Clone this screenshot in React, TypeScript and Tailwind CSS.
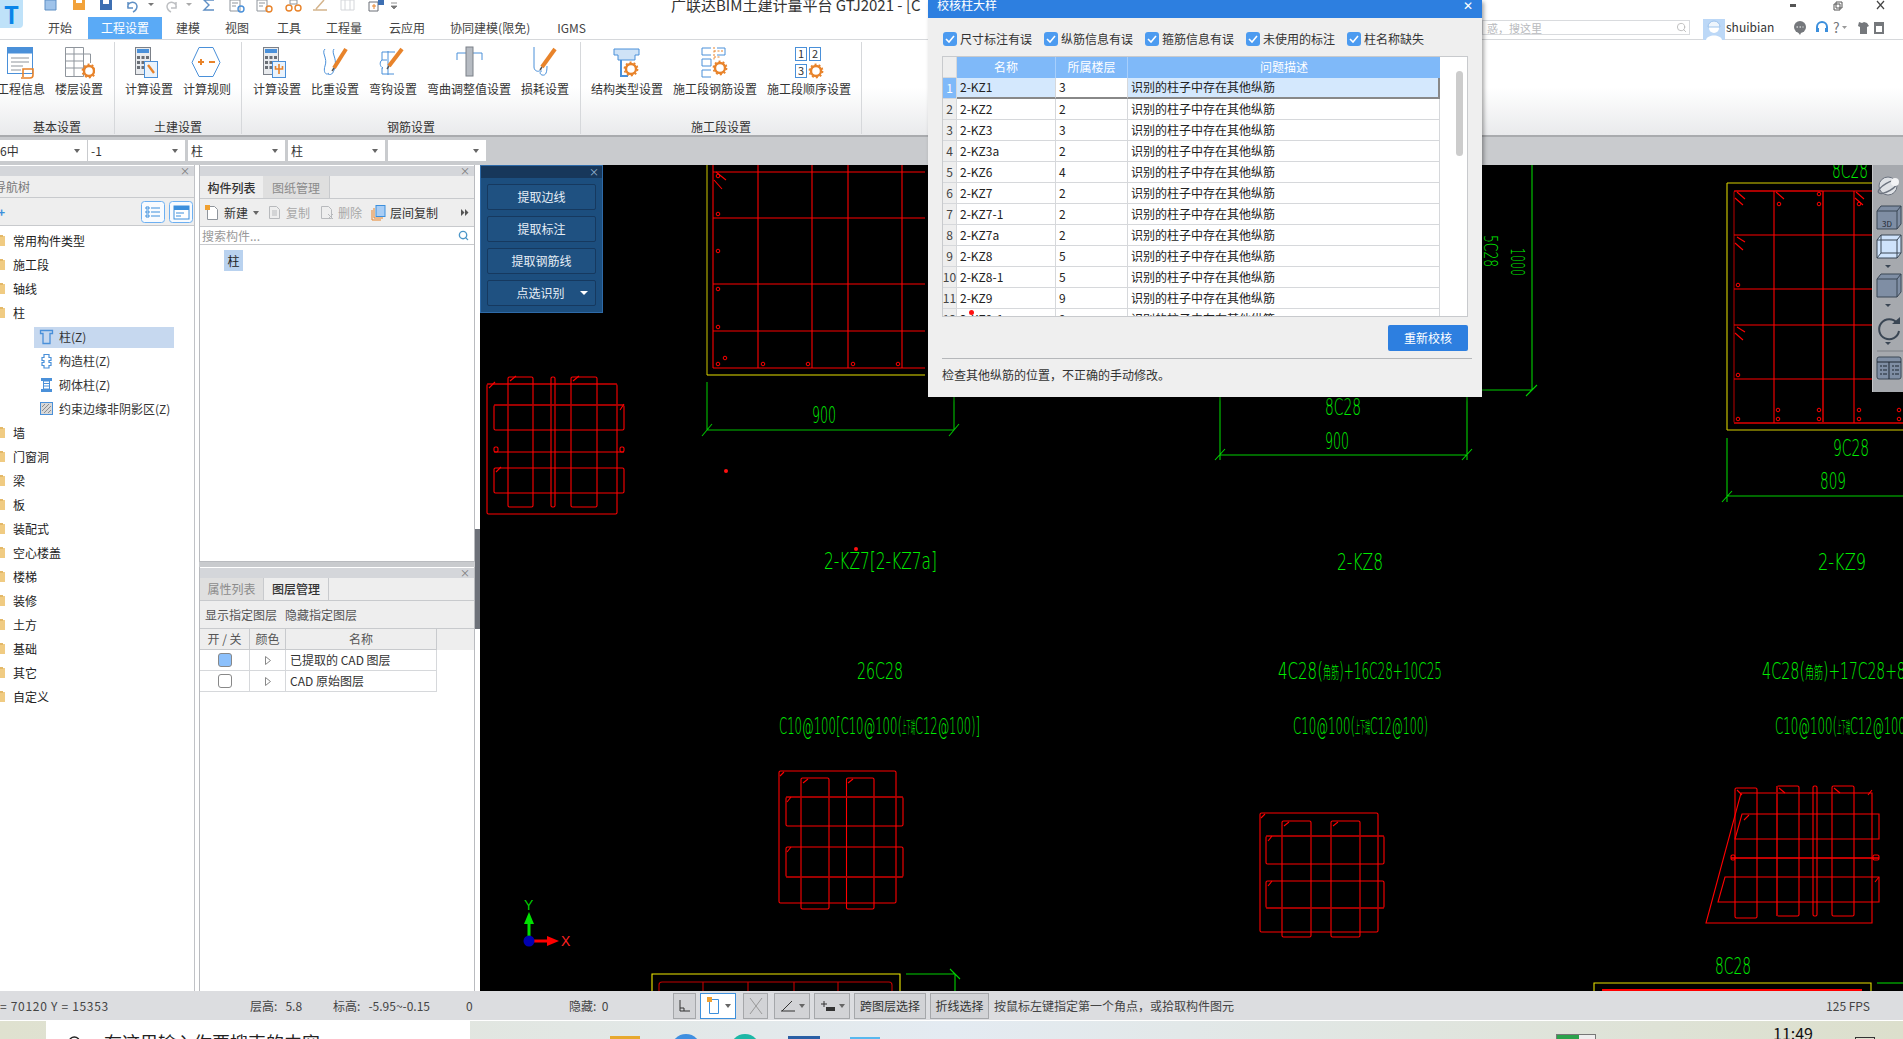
import React from 'react';
import { Search } from 'lucide-react';

const BLUE = '#4a90d9';
const ORANGE = '#e8832a';
const GRAY = '#7b8088';

// small cog used on most of the ribbon icons
const Gear = ({ x, y, r = 5 }: { x: number; y: number; r?: number }) => (
  <g>
    <circle cx={x} cy={y} r={r} fill="none" stroke={ORANGE} strokeWidth={2.4} />
    <circle cx={x} cy={y} r={r + 1.6} fill="none" stroke={ORANGE} strokeWidth={1.6} strokeDasharray="2 2.2" />
  </g>
);

const Pencil = ({ x1, y1, x2, y2 }: { x1: number; y1: number; x2: number; y2: number }) => (
  <g>
    <line x1={x1} y1={y1} x2={x2} y2={y2} stroke={ORANGE} strokeWidth={4} />
    <line x1={x1} y1={y1} x2={x1 - 2} y2={y1 + 3} stroke="#555" strokeWidth={1.4} />
  </g>
);

const Calc = () => (
  <g>
    <rect x={2.5} y={1.5} width={15} height={27} fill="#e9ebee" stroke={GRAY} />
    <rect x={4} y={3} width={12} height={4} fill={BLUE} />
    <path d="M4 10h3v3h-3zM8.500 10h3v3h-3zM13 10h3v3h-3zM4 15h3v3h-3zM8.500 15h3v3h-3zM4 20h3v3h-3zM8.500 20h3v3h-3z" fill="#6a6f76" />
  </g>
);

const ribbonIcons: Record<string, React.ReactNode> = {
  info: (
    <g>
      <rect x={2.500} y={1.500} width={25} height={26} fill="#fff" stroke={BLUE} />
      <rect x={2.500} y={1.500} width={25} height={6} fill={BLUE} />
      <path d="M6 12h18M6 16h18M6 20h12M6 24h10" stroke="#8f959c" />
      <path d="M18 31v-8h10v6a3 3 0 0 1-3 3h-9" fill="none" stroke={ORANGE} strokeWidth={1.6} />
    </g>
  ),
  floor: (
    <g>
      <path d="M2.500 1.500h18v29h-18zM2.500 8h18M2.500 15h18M2.500 22h18M11 1.500v29M20.500 8h7v9" fill="#fff" stroke="#8f959c" />
      <Gear x={26} y={25} />
    </g>
  ),
  calc: (
    <g>
      <Calc />
      <rect x={11.500} y={15.500} width={13} height={16} fill="#eaf3fc" stroke={BLUE} />
      <path d="M15 19l6 8" stroke={ORANGE} strokeWidth={2.4} />
    </g>
  ),
  rule: (
    <g>
      <path d="M8 1.500h14l7 15-7 14h-14l-7-14z" fill="#fff" stroke={BLUE} />
      <path d="M7 16h6M10 13v6M18 16h6" stroke={ORANGE} strokeWidth={2} />
    </g>
  ),
  calc2: (
    <g>
      <Calc />
      <rect x={11.500} y={15.500} width={13} height={16} fill="#eaf3fc" stroke={BLUE} />
      <path d="M18 18v10M14.500 20v3h7v-3" fill="none" stroke={ORANGE} strokeWidth={1.6} />
    </g>
  ),
  weight: (
    <g>
      <path d="M6 3C2 7 9 12 6 20c-2 6 1 10 4 7M15 3c-3 4 3 9 1 17-1 6-3 10-7 8" fill="none" stroke={BLUE} />
      <Pencil x1={15} y1={22} x2={27} y2={3} />
    </g>
  ),
  hook: (
    <g>
      <path d="M18 6H5v8h5M5 14c-3 2-2 7 1 8h-1v6h12M11 5v24" fill="none" stroke={BLUE} />
      <Pencil x1={12} y1={20} x2={25} y2={3} />
    </g>
  ),
  bend: (
    <g>
      <path d="M4 14V7h25v7" fill="none" stroke={BLUE} />
      <rect x={13} y={1} width={7} height={29} fill="#b6bbc2" stroke="#7b8088" />
    </g>
  ),
  loss: (
    <g>
      <path d="M5 1v20c0 5 7 6 7 1M18 20c0 6-1 10-5 9-3-1-2-4 0-4" fill="none" stroke={BLUE} />
      <Pencil x1={13} y1={21} x2={26} y2={3} />
    </g>
  ),
  struct: (
    <g>
      <path d="M3 3h25v6h-4v5h-17v-5h-4z" fill="#cfe3f7" stroke={BLUE} />
      <path d="M10 14v16h7" fill="none" stroke={BLUE} strokeWidth={2} />
      <Gear x={20} y={23} />
    </g>
  ),
  seg: (
    <g>
      <path d="M12 2H3v7h9M3 13h9v7H3zM12 24H3v7h9M18 2h8v7h-8" fill="none" stroke={BLUE} />
      <path d="M15 1v13M15 5h9M15 11h6" stroke={ORANGE} strokeDasharray="2 1.500" />
      <Gear x={21} y={22} />
    </g>
  ),
  order: (
    <g>
      <rect x={2.500} y={1.500} width={11} height={13} fill="#fff" stroke={BLUE} />
      <rect x={16.500} y={1.500} width={11} height={13} fill="#fff" stroke={BLUE} />
      <rect x={2.500} y={18.500} width={11} height={13} fill="#fff" stroke={BLUE} />
      <text x={8} y={12} fontSize={11} textAnchor="middle" fill="#333">1</text>
      <text x={22} y={12} fontSize={11} textAnchor="middle" fill="#333">2</text>
      <text x={8} y={29} fontSize={11} textAnchor="middle" fill="#333">3</text>
      <Gear x={23} y={25} />
    </g>
  ),
};

const ribbonGroups = [
  { label: '基本设置', cls: 'w-[115px]', items: [['工程信息', 'info', '-ml-[3px]'], ['楼层设置', 'floor', '']] },
  { label: '土建设置', cls: 'w-[127px] pl-[10px]', items: [['计算设置', 'calc', ''], ['计算规则', 'rule', '']] },
  { label: '钢筋设置', cls: 'w-[339px] pl-[11px]', items: [['计算设置', 'calc2', ''], ['比重设置', 'weight', ''], ['弯钩设置', 'hook', ''], ['弯曲调整值设置', 'bend', ''], ['损耗设置', 'loss', '']] },
  { label: '施工段设置', cls: 'w-[281px] pl-[10px]', items: [['结构类型设置', 'struct', ''], ['施工段钢筋设置', 'seg', ''], ['施工段顺序设置', 'order', '']] },
];

const tabs = [
  ['开始', ''],
  ['工程设置', 'ml-[3px]'],
  ['建模', 'ml-[1px]'],
  ['视图', '-ml-[1px]'],
  ['工具', 'ml-[2px]'],
  ['工程量', '-ml-[1px]'],
  ['云应用', 'ml-[1px]'],
  ['协同建模(限免)', '-ml-[1px]'],
  ['IGMS', 'ml-[1px]'],
];

const treeTop = ['常用构件类型', '施工段', '轴线', '柱'];
const treeBottom = ['墙', '门窗洞', '梁', '板', '装配式', '空心楼盖', '楼梯', '装修', '土方', '基础', '其它', '自定义'];
const treeSub = ['柱(Z)', '构造柱(Z)', '砌体柱(Z)', '约束边缘非阴影区(Z)'];

const checks = [
  ['尺寸标注有误', 'w-[101px]'],
  ['纵筋信息有误', 'w-[101px]'],
  ['箍筋信息有误', 'w-[101px]'],
  ['未使用的标注', 'w-[101px]'],
  ['柱名称缺失', 'w-[90px]'],
];

const rows = [
  ['2-KZ1', '3'], ['2-KZ2', '2'], ['2-KZ3', '3'], ['2-KZ3a', '2'], ['2-KZ6', '4'], ['2-KZ7', '2'],
  ['2-KZ7-1', '2'], ['2-KZ7a', '2'], ['2-KZ8', '5'], ['2-KZ8-1', '5'], ['2-KZ9', '9'], ['2-KZ9-1', '9'],
];

const Folder = () => (
  <svg width="6" height="12" viewBox="0 0 6 12" className="shrink-0">
    <rect x="-4" y="1" width="9" height="10" fill="#f0cb82" />
    <rect x="-4" y="0" width="7" height="2" fill="#e3b868" />
  </svg>
);

const Panelhead = () => (
  <div className="h-[10px] bg-[#d4d6da] flex items-center justify-end pr-[4px] text-[#777] text-[10px] leading-none">
    <span>×</span>
  </div>
);

const TreeRow = ({ label }: { label: string }) => (
  <div className="h-[24px] flex items-center gap-[7px] text-[#222]">
    <Folder />
    <span>{label}</span>
  </div>
);

const subIcons = [
  <path key="a" d="M1.500 1.500h12v3h-2.500v10h-7v-10h-2.500z" fill="none" stroke={BLUE} strokeWidth={1.300} />,
  <path key="b" d="M5 1.500h5v3h2v3h-2v2h2v3h-2v2.500h-5v-2.500h-2v-3h2v-2h-2v-3h2z" fill="none" stroke={BLUE} strokeWidth={1.200} />,
  <g key="c"><path d="M2 1h11v3h-11zM2 12h11v3h-11z" fill={BLUE} /><path d="M4.500 4h6v8h-6z" fill="#fff" stroke={BLUE} /><path d="M5 6.500h5M5 9h5" stroke={BLUE} /></g>,
  <g key="d"><rect x="1.500" y="1.500" width="12" height="12" fill="#d8d8d8" stroke={BLUE} /><path d="M3 6l3-3M3 10l7-7M5 12l7-7M9 12l3-3" stroke="#8d8d8d" /></g>,
];

// the black CAD view: coordinates are page pixels, the viewBox shifts them into the canvas
const R = ({ x, y, x2, y2, dark }: { x: number; y: number; x2: number; y2: number; dark?: boolean }) => (
  <rect x={x} y={y} width={x2 - x} height={y2 - y} rx={1.500} fill="none" stroke={dark ? '#a80000' : '#ff0000'} strokeWidth={1.100} />
);

const L = ({ d, c = '#ff0000', w = 1.100 }: { d: string; c?: string; w?: number }) => (
  <path d={d} fill="none" stroke={c} strokeWidth={w} />
);

const CadText = ({ x, y, w, text, size = 23, rotate }: { x: number; y: number; w: number; text: string; size?: number; rotate?: boolean }) => (
  <text
    x={x}
    y={y}
    textLength={w}
    lengthAdjust="spacingAndGlyphs"
    fontSize={size}
    fontFamily="'DejaVu Sans', 'Noto Sans CJK SC', sans-serif"
    fontWeight={200}
    fill="#00ee00"
    transform={rotate ? `rotate(90 ${x} ${y})` : undefined}
  >
    {text}
  </text>
);

const Dot = ({ x, y }: { x: number; y: number }) => <circle cx={x} cy={y} r={2} fill="#ff1010" />;

const Ring = ({ x, y }: { x: number; y: number }) => <circle cx={x} cy={y} r={1.800} fill="none" stroke="#ff0000" />;

const CadDrawing = () => (
  <svg width="1423" height="826" viewBox="480 165 1423 826" className="block">
    {/* big column behind the dialog */}
    <L d="M707 165V375" c="#8a8600" w={1.500} />
    <L d="M707 375H925" c="#e6e000" />
    {[172, 218, 284, 368].map(y => <L key={y} d={`M713 ${y}H925`} />)}
    <L d="M713 331H925" c="#a80000" w={1.500} />
    {[713, 758, 812, 848, 902].map(x => <L key={x} d={`M${x} 165V368`} />)}
    {[[718, 176], [718, 214], [718, 251], [718, 289], [718, 327], [718, 364], [725, 358], [763, 364], [808, 364], [853, 364], [898, 364]].map(([x, y]) => <Ring key={`${x}-${y}`} x={x} y={y} />)}
    <L d="M716 172l10 8M714 180l8 9" />
    <L d="M707 382V430M707 430H954M954 397V430M702 436l10-12M949 436l10-12" c="#00c000" />
    <CadText x={812} y={423} w={24} text="900" />

    {/* loose section left */}
    <R x={487} y={384} x2={617} y2={514} />
    <L d="M487 384H617" c="#a80000" w={1.500} />
    <R x={508} y={377} x2={533} y2={507} />
    <R x={551} y={377} x2={555} y2={507} />
    <R x={571} y={377} x2={597} y2={507} />
    <R x={494} y={405} x2={624} y2={430} />
    <L d="M494 405H624" c="#a80000" w={1.600} />
    <R x={494} y={447} x2={498} y2={452} />
    <R x={620} y={447} x2={624} y2={452} />
    <L d="M494 452H624" />
    <R x={494} y={468} x2={624} y2={493} />
    <L d="M489 388l6-6M510 381l6-5M573 381l6-5M620 410l4-6M496 472l5-5" />
    <Dot x={726} y={471} />

    {/* green labels column 1 */}
    <Dot x={856} y={549} />
    <CadText x={824} y={569} w={113} text="2-KZ7[2-KZ7a]" />
    <CadText x={857} y={679} w={46} text="26C28" />
    <CadText x={779} y={734} w={123} text="C10@100[C10@100(" />
    <CadText x={902} y={733} w={13} size={16} text="上下端" />
    <CadText x={915} y={734} w={65} text="C12@100)]" />

    <R x={779} y={771} x2={896} y2={903} />
    <R x={801} y={778} x2={829} y2={909} />
    <R x={846.500} y={778} x2={874} y2={909} />
    <R x={786} y={797} x2={903} y2={826} />
    <L d="M786 797H903" c="#a80000" w={1.600} />
    <R x={786} y={847} x2={903} y2={877} />
    <L d="M786 877H903" c="#a80000" w={1.600} />
    <L d="M780 776l4-4M803 783l5-4M848 783l5-4M787 802l4-5M787 852l4-5" />

    {/* axis gizmo */}
    <path d="M529 938V920" stroke="#00e000" strokeWidth={3} />
    <path d="M529 912l-5 12h10z" fill="#00e000" />
    <path d="M532 941H548" stroke="#ff0000" strokeWidth={3} />
    <path d="M559 941l-12-5v10z" fill="#ff0000" />
    <circle cx={529} cy={941} r={5.500} fill="#0000b0" />
    <text x={524} y={910} fontSize={14} fill="#00d000" fontFamily="'Liberation Sans', sans-serif">Y</text>
    <text x={561} y={946} fontSize={14} fill="#ff2020" fontFamily="'Liberation Sans', sans-serif">X</text>

    {/* bottom cut off section */}
    <L d="M652 991V974H900V991" c="#f0ea00" />
    <L d="M659 991V985q0-3 3-3H889q3 0 3 3v6" c="#c00000" />
    <L d="M703 982V991M748 982V991M794 982V991M838 982V991" c="#c00000" />
    <L d="M906 974H955M955 974V991M950 969l10 10" c="#00d000" />

    {/* dimensions right of the dialog */}
    <L d="M1482 390H1532M1532 165V390M1526 396l11-11" c="#00d000" />
    <CadText x={1511} y={248} w={28} text="1000" size={20} rotate />
    <CadText x={1484} y={235} w={32} text="5C28" size={20} rotate />

    <CadText x={1325} y={415} w={36} text="8C28" />
    <L d="M1220 397V460M1467 397V460M1220 455H1467M1215 460l10-11M1462 460l10-11" c="#00d000" />
    <CadText x={1325} y={449} w={24} text="900" />
    <CadText x={1337} y={570} w={46} text="2-KZ8" />
    <CadText x={1278} y={679} w={45} text="4C28(" />
    <CadText x={1323} y={678} w={16} size={16} text="角筋" />
    <CadText x={1339} y={679} w={103} text=")+16C28+10C25" />
    <CadText x={1293} y={734} w={62} text="C10@100(" />
    <CadText x={1355} y={733} w={15} size={16} text="上下端" />
    <CadText x={1370} y={734} w={58} text="C12@100)" />

    <R x={1260} y={813} x2={1378} y2={932} />
    <R x={1282} y={821} x2={1311} y2={937} />
    <R x={1331} y={821} x2={1360} y2={937} />
    <R x={1266} y={836} x2={1384} y2={864} />
    <R x={1266} y={881} x2={1384} y2={908} />
    <L d="M1266 836H1384M1266 908H1384" c="#a80000" w={1.500} />
    <L d="M1261 818l4-4M1284 826l5-4M1333 826l5-4M1268 841l4-5M1268 886l4-5" />

    {/* right hand column */}
    <L d="M1727 183H1903M1727 183V430M1727 430H1903" c="#d8d000" />
    <R x={1734} y={191} x2={1823} y2={423} dark />
    <L d="M1734 423H1903M1823 191V423" c="#a80000" w={2} />
    <L d="M1734 191H1903" />
    {[235, 289, 325, 379].map(y => <L key={y} d={`M1734 ${y}H1903`} />)}
    {[1774, 1854].map(x => <L key={x} d={`M${x} 191V423`} />)}
    <L d="M1737 192l8 7M1735 198l8 7M1776 192l8 7M1737 237l8 5M1735 243l8 7M1737 327l8 5M1735 333l8 7M1856 192l8 7M1855 198l8 7" />
    {[[1738, 419], [1738, 285], [1738, 375], [1778, 410], [1778, 419], [1819, 410], [1819, 419], [1859, 410], [1859, 419], [1899, 410], [1899, 419], [1819, 194], [1819, 204], [1779, 204], [1859, 204]].map(([x, y]) => <Ring key={`${x}-${y}`} x={x} y={y} />)}
    <CadText x={1832} y={178} w={36} text="8C28" />
    <CadText x={1833} y={456} w={36} text="9C28" />
    <CadText x={1820} y={489} w={26} text="809" />
    <L d="M1727 438V502M1727 496H1903M1722 502l10-11" c="#00d000" />
    <CadText x={1818} y={570} w={48} text="2-KZ9" />
    <CadText x={1762} y={679} w={43} text="4C28(" />
    <CadText x={1805} y={678} w={18} size={16} text="角筋" />
    <CadText x={1823} y={679} w={110} text=")+17C28+8C25" />
    <CadText x={1775} y={734} w={62} text="C10@100(" />
    <CadText x={1837} y={733} w={13} size={16} text="上下端" />
    <CadText x={1850} y={734} w={60} text="C12@100)" />

    <L d="M1741 793H1872V923H1706Z" />
    <R x={1735} y={788} x2={1757} y2={918} />
    <R x={1777} y={786} x2={1799} y2={916} />
    <L d="M1777 786V916" c="#a80000" w={2} />
    <R x={1813} y={786} x2={1817} y2={916} />
    <R x={1832} y={786} x2={1854} y2={916} />
    <L d="M1742 814H1879V839H1735Z" />
    <L d="M1731 858H1879" w={1.400} />
    <R x={1731} y={855} x2={1735} y2={860} />
    <R x={1873} y={855} x2={1879} y2={860} />
    <L d="M1725 877H1879V902H1718Z" />
    <L d="M1737 790l5 5M1779 788l6 5M1834 788l6 5M1868 795l4-5M1744 820l5-5M1875 882l4-5" />
    <CadText x={1715} y={974} w={36} text="8C28" />
    <L d="M1594 991V983H1871V991" c="#e6e000" />
    <path d="M1602 990H1862" stroke="#ff0000" strokeWidth={2} />
    <L d="M1877 983H1903" c="#00d000" />
  </svg>
);

const QuickAccess = () => (
  <svg width="400" height="17" viewBox="0 0 400 17" className="absolute left-0 top-0">
    <path d="M45 0h11v10h-11z" fill="#9fc3ea" stroke="#5f8fc4" />
    <path d="M73 0h12v10h-12z" fill="#f2a23a" />
    <path d="M76 -3h6v6h-6z" fill="#fff" />
    <path d="M100 0h12v10h-12z" fill="#3d6fb2" />
    <path d="M103 0h6v4h-6z" fill="#fff" />
    <path d="M128 8c-2-6 8-8 9-2 0 3-2 5-4 6M128 2v6h5" fill="none" stroke="#5f8fc4" strokeWidth={1.500} />
    <path d="M148 3h6l-3 3z" fill="#777" />
    <path d="M176 8c2-6-8-8-9-2 0 3 2 5 4 6M176 2v6h-5" fill="none" stroke="#bdbfc2" strokeWidth={1.500} />
    <path d="M186 3h6l-3 3z" fill="#aaa" />
    <path d="M214 0h-10l5 5-5 5h10" fill="none" stroke="#5f8fc4" strokeWidth={1.400} />
    <path d="M230 0h10v11h-10zM232 3h6M232 6h4" fill="#fff" stroke="#8f959c" />
    <circle cx="241" cy="9" r="3" fill="none" stroke={BLUE} strokeWidth={1.400} />
    <path d="M257 0h10v11h-10zM259 3h6M259 6h4" fill="#fff" stroke="#8f959c" />
    <circle cx="269" cy="9" r="3" fill="none" stroke={ORANGE} strokeWidth={1.400} />
    <circle cx="289" cy="8" r="3" fill="none" stroke={ORANGE} strokeWidth={1.400} />
    <circle cx="298" cy="8" r="3" fill="none" stroke={ORANGE} strokeWidth={1.400} />
    <path d="M290 0h7v4h-7z" fill="none" stroke="#8f959c" />
    <path d="M313 10h14M316 9l8-9" stroke="#d4b48c" strokeWidth={1.500} />
    <path d="M341 0h13v10h-13zM345 0v10M350 0v10" fill="none" stroke="#d4d6da" />
    <path d="M369 2h9v9h-9z" fill="#fff" stroke="#6a6f76" />
    <path d="M378 0h6v5h-6z" fill="#3d6fb2" />
    <path d="M372 6h4M374 4v5" stroke={ORANGE} />
    <path d="M391 3h6M391 6h6l-3 3z" fill="#777" stroke="#777" strokeWidth={0.800} />
  </svg>
);

const StatusBtn = ({ cls, children }: { cls: string; children: React.ReactNode }) => (
  <div className={`h-[26px] bg-[#d2d3d6] border border-[#a5a7aa] flex items-center justify-center text-[#333] ${cls}`}>{children}</div>
);

export default function App() {
  return (
    <div className="relative w-[1903px] h-[1039px] overflow-hidden flex flex-col bg-white text-[12px] leading-[16px] text-[#222] font-['Noto_Sans_CJK_SC','Liberation_Sans',sans-serif]">
      {/* title strip */}
      <div className="relative h-[17px] shrink-0 bg-white overflow-hidden">
        <QuickAccess />
        <div className="absolute left-[671px] -top-[5px] text-[15px] leading-[20px] text-[#333] whitespace-nowrap">广联达BIM土建计量平台 GTJ2021 - [C</div>
        <svg width="120" height="17" viewBox="0 0 120 17" className="absolute left-[1783px] top-0">
          <path d="M7 4h6v3h-6z" fill="#555" />
          <path d="M53 2h6v6h-6zM51 4h6v6h-6z" fill="#fff" stroke="#555" />
          <path d="M94 1l7 8M101 1l-7 8" stroke="#444" strokeWidth={1.200} />
        </svg>
      </div>

      {/* tab strip */}
      <div className="relative h-[23px] shrink-0 bg-white border-b border-[#d6d8db] flex items-stretch pl-[35px]">
        {tabs.map(([t, m]) => (
          <div
            key={t}
            className={`px-[13px] flex items-center whitespace-nowrap ${m} ${t === '工程设置' ? 'bg-[#5aaaf6] text-white' : 'text-[#444]'}`}
          >
            {t}
          </div>
        ))}
        <div className="ml-auto mr-[19px] flex items-center gap-[3px] self-start h-[20px] mt-[1px]">
          <div className="w-[208px] h-[15px] border border-[#d9dbde] bg-white flex items-center justify-between pl-[4px] pr-[2px] text-[11px] text-[#b8babd] -mt-[1px]">
            <span className="overflow-hidden whitespace-nowrap">惑，搜这里</span>
            <Search size={11} className="text-[#bbb]" />
          </div>
          <svg width="22" height="21" viewBox="0 0 22 21" className="ml-[10px] mt-[2px]">
            <rect width="22" height="21" fill="#bcd8f7" />
            <circle cx="11" cy="9" r="5" fill="#fff" />
            <path d="M3 21c1-6 15-6 16 0z" fill="#fff" />
            <path d="M5 8a6 6 0 0 1 12 0z" fill="#eef5fc" stroke="#9dc3ec" />
          </svg>
          <span className="w-[52px] -ml-[2px] text-[#333] -mt-[2px]">shuibian</span>
          <svg width="104" height="16" viewBox="0 0 104 16" className="-ml-[1px] -mt-[1px]">
            <circle cx="20" cy="7" r="6" fill="#75787c" />
            <path d="M17 11l3 4 2-4z" fill="#75787c" />
            <path d="M16.500 7h7" stroke="#fff" strokeDasharray="1.500 1.500" />
            <path d="M37 9V7a5 5 0 0 1 10 0v2" fill="none" stroke="#3c8fdc" strokeWidth={2} />
            <rect x="36" y="8" width="3" height="4" fill="#3c8fdc" />
            <rect x="45" y="8" width="3" height="4" fill="#3c8fdc" />
            <text x="53" y="13" fontSize="14" fill="#75787c">?</text>
            <path d="M62 6h5l-2.500 3z" fill="#999" />
            <path d="M79 2l3 1 2-1 3 1 2 3-2 1v7h-7v-7l-2-1z" fill="#75787c" />
            <rect x="94" y="2" width="10" height="12" fill="#75787c" />
            <rect x="96" y="6" width="6" height="6" fill="#fff" />
          </svg>
        </div>
      </div>

      {/* logo hangs across the two strips */}
      <div className="absolute left-0 top-0 w-[23px] h-[28px] rounded-br-[4px] bg-[#bfe2f9] flex items-center justify-center text-[#0a84e8] text-[24px] font-bold leading-none">T</div>

      {/* ribbon */}
      <div className="h-[97px] shrink-0 border-b-2 border-[#a9abae] bg-gradient-to-b from-white via-white to-[#e9eaec] flex">
        {ribbonGroups.map(g => (
          <div key={g.label} className={`relative border-r border-[#d6d8db] mt-[2px] mb-[1px] ${g.cls}`}>
            <div className="flex gap-[10px] pt-[4px]">
              {g.items.map(([label, icon, extra]) => (
                <div key={label + icon} className={`flex flex-col items-center shrink-0 ${extra}`}>
                  <svg width="32" height="34" viewBox="0 0 32 34" className="block">{ribbonIcons[icon]}</svg>
                  <div className="mt-[1px] whitespace-nowrap text-[#333]">{label}</div>
                </div>
              ))}
            </div>
            <div className="absolute left-0 right-0 bottom-0 h-[14px] flex items-center justify-center text-[#333]">{g.label}</div>
          </div>
        ))}
      </div>

      {/* combos */}
      <div className="h-[28px] shrink-0 bg-[#c9cbce] flex items-start pt-[3px]">
        {[['6中', 'w-[87px] pl-0'], ['-1', 'w-[97px] ml-[1px] pl-[3px]'], ['柱', 'w-[97px] ml-[3px] pl-[3px]'], ['柱', 'w-[97px] ml-[3px] pl-[3px]'], ['', 'w-[98px] ml-[3px] pl-[3px]']].map(([t, w], i) => (
          <div key={i} className={`h-[21px] bg-white flex items-center justify-between pr-[7px] text-[#333] ${w}`}>
            <span>{t}</span>
            <span className="w-0 h-0 border-x-[3px] border-x-transparent border-t-[4px] border-t-[#666]" />
          </div>
        ))}
      </div>

      {/* main */}
      <div className="relative flex-1 flex bg-[#c9cbce] min-h-0">
        <div className="w-[195px] shrink-0 bg-white border-r border-[#c0c2c6] flex flex-col">
          <div className="mt-[1px]"><Panelhead /></div>
          <div className="h-[22px] bg-[#eeeeee] border-b border-[#c8cacd] flex items-center text-[#777] -indent-[6px] pt-[1px] overflow-hidden">导航树</div>
          <div className="h-[28px] bg-[#eeeeee] border-b border-[#c8cacd] flex items-center pr-[1px]">
            <span className="text-[#3c8fdc] text-[12px] font-bold leading-none -ml-[2px]">+</span>
            <div className="ml-auto flex gap-[4px]">
              <svg width="24" height="22" viewBox="0 0 24 22">
                <rect x=".5" y=".5" width="23" height="21" rx="3" fill="#f8fbff" stroke="#6db0f2" />
                <path d="M5 6h3v2h-3zM5 10h3v2h-3zM5 14h3v2h-3zM10 7h9M10 11h9M10 15h9" fill="none" stroke="#3c8fdc" />
              </svg>
              <svg width="24" height="22" viewBox="0 0 24 22">
                <rect x=".5" y=".5" width="23" height="21" rx="3" fill="#f8fbff" stroke="#6db0f2" />
                <rect x="5" y="5" width="15" height="13" fill="#fff" stroke="#3c8fdc" />
                <rect x="5" y="5" width="15" height="4" fill="#3c8fdc" />
                <path d="M7 12h8M7 15h5" stroke="#3c8fdc" />
              </svg>
            </div>
          </div>
          <div className="pt-[3px]">
            {treeTop.map(t => <TreeRow key={t} label={t} />)}
            {treeSub.map((t, i) => (
              <div key={t} className="h-[24px] flex items-center">
                <div className={`ml-[34px] h-[21px] flex items-center gap-[4px] pl-[4px] ${i === 0 ? 'w-[140px] bg-[#c6d8ef]' : ''}`}>
                  <svg width="17" height="16" viewBox="0 0 15 16" className="shrink-0">{subIcons[i]}</svg>
                  <span className="whitespace-nowrap text-[#333]">{t}</span>
                </div>
              </div>
            ))}
            {treeBottom.map(t => <TreeRow key={t} label={t} />)}
          </div>
        </div>

        <div className="w-[4px] shrink-0 bg-white" />

        <div className="w-[276px] shrink-0 flex flex-col gap-[5px]">
          <div className="h-[397px] shrink-0 bg-white border-x border-b border-[#b9bbbf] flex flex-col">
            <div className="mt-[1px]"><Panelhead /></div>
            <div className="h-[23px] bg-[#eeeeee] border-b border-[#c8cacd] flex items-stretch">
              <div className="w-[63px] flex items-center justify-center pt-[1px] font-medium text-[#333]">构件列表</div>
              <div className="w-[67px] bg-[#dfdfdf] border-r border-[#c8cacd] flex items-center justify-center pt-[1px] text-[#8b8b8b]">图纸管理</div>
            </div>
            <div className="h-[28px] bg-[#eeeeee] border-b border-[#c8cacd] flex items-center pl-[5px] whitespace-nowrap">
              <svg width="14" height="16" viewBox="0 0 14 16">
                <path d="M2.500 1.500h7l3 3v10h-10z" fill="#fff" stroke="#8f959c" />
                <path d="M0 0h5v5h-5z" fill="#f0a030" />
              </svg>
              <span className="ml-[5px] text-[#333]">新建</span>
              <span className="ml-[5px] w-0 h-0 border-x-[3px] border-x-transparent border-t-[4px] border-t-[#666]" />
              <svg width="13" height="15" viewBox="0 0 13 15" className="ml-[9px]"><path d="M1.500 1.500h7l3 3v9h-10zM4 6h5M4 8h5M4 10h5" fill="none" stroke="#b8babd" /></svg>
              <span className="ml-[5px] text-[#a8a8a8]">复制</span>
              <svg width="14" height="15" viewBox="0 0 14 15" className="ml-[10px]"><path d="M1.500 1.500h7l3 3v9h-10zM8 9l5 5M13 9l-5 5" fill="none" stroke="#b8babd" /></svg>
              <span className="ml-[4px] text-[#a8a8a8]">删除</span>
              <svg width="15" height="16" viewBox="0 0 15 16" className="ml-[9px]">
                <path d="M1 5v10h9" fill="none" stroke={ORANGE} />
                <path d="M3 3v10h9" fill="none" stroke={ORANGE} />
                <rect x="5" y="0.500" width="9" height="11" fill="#a8cdf5" stroke="#3c8fdc" />
              </svg>
              <span className="ml-[4px] text-[#333]">层间复制</span>
              <svg width="8" height="7" viewBox="0 0 8 7" className="ml-auto mr-[5px]"><path d="M0 0l3.500 3.500L0 7zM4 0l3.500 3.500L4 7z" fill="#555" /></svg>
            </div>
            <div className="h-[18px] bg-white border-b border-[#c8cacd] flex items-center justify-between pl-[2px] pr-[5px] text-[#999]">
              <span>搜索构件...</span>
              <Search size={11} strokeWidth={3} className="text-[#4c96c8]" />
            </div>
            <div className="pl-[24px] pt-[5px]">
              <div className="w-[19px] h-[21px] bg-[#b9d2ef] flex items-center justify-center text-[#222]">柱</div>
            </div>
          </div>

          <div className="flex-1 bg-white border-x border-[#b9bbbf] flex flex-col">
            <div className="mt-[1px]"><Panelhead /></div>
            <div className="h-[23px] bg-[#eeeeee] border-b border-[#c8cacd] flex items-stretch">
              <div className="w-[64px] bg-[#dfdfdf] border-r border-[#c8cacd] flex items-center justify-center text-[#8b8b8b]">属性列表</div>
              <div className="w-[65px] border-r border-[#c8cacd] flex items-center justify-center font-medium text-[#333]">图层管理</div>
            </div>
            <div className="h-[28px] bg-[#eeeeee] border-b border-[#c8cacd] flex items-center pl-[5px] gap-[8px] text-[#555]">
              <span>显示指定图层</span>
              <span>隐藏指定图层</span>
            </div>
            <div className="h-[21px] bg-[#eeeeee] flex items-stretch text-[#555]">
              <div className="w-[50px] border-r border-b border-[#c8cacd] flex items-center justify-center">开 / 关</div>
              <div className="w-[36px] border-r border-b border-[#c8cacd] flex items-center justify-center">颜色</div>
              <div className="w-[151px] border-r border-b border-[#c8cacd] flex items-center justify-center">名称</div>
            </div>
            {[['已提取的 CAD 图层', true], ['CAD 原始图层', false]].map(([name, on]) => (
              <div key={name as string} className="h-[21px] flex items-stretch">
                <div className="w-[50px] border-r border-b border-[#d6d8db] flex items-center justify-center">
                  <div className={`w-[14px] h-[14px] rounded-[3px] border border-[#888] ${on ? 'bg-[#8cc0fb]' : 'bg-white'}`} />
                </div>
                <div className="w-[36px] border-r border-b border-[#d6d8db] flex items-center justify-center">
                  <svg width="6" height="9" viewBox="0 0 6 9"><path d="M.5.500l5 4-5 4z" fill="#fff" stroke="#888" /></svg>
                </div>
                <div className="w-[151px] border-r border-b border-[#d6d8db] flex items-center pl-[4px] text-[#333]">{name as string}</div>
              </div>
            ))}
          </div>
        </div>

        <div className="w-[5px] shrink-0 bg-white flex flex-col">
          <div className="h-[364px] bg-white" />
          <div className="h-[100px] bg-[#6d7179]" />
        </div>

        <div className="relative flex-1 bg-black overflow-hidden">
          <CadDrawing />

          {/* floating extract palette */}
          <div className="absolute left-0 top-0 w-[123px] h-[148px] bg-[#1c4e7e] border border-[#2e6aa8] flex flex-col text-[#e6eef6]">
            <div className="h-[12px] bg-[#17375a] flex items-center justify-end pr-[3px] text-[10px] leading-none text-[#9dbad8]">×</div>
            <div className="flex flex-col gap-[6px] pt-[6px] px-[6px]">
              {['提取边线', '提取标注', '提取钢筋线'].map(t => (
                <div key={t} className="h-[26px] rounded-[2px] bg-[#1f5181] border border-[#16395f] flex items-center justify-center">{t}</div>
              ))}
              <div className="relative h-[26px] rounded-[2px] bg-[#1f5181] border border-[#16395f] flex items-center justify-center pr-[2px]">
                点选识别
                <span className="absolute right-[7px] top-[10px] w-0 h-0 border-x-[4px] border-x-transparent border-t-[4px] border-t-white" />
              </div>
            </div>
          </div>

          {/* view cube strip */}
          <div className="absolute right-0 top-0 w-[31px] h-[227px] bg-[#a6a9ae] border-l border-[#c4c6c9]">
            <svg width="30" height="227" viewBox="0 0 30 227" className="block">
              <circle cx="15" cy="21" r="9" fill="#dfe2e6" stroke="#6d7480" />
              <ellipse cx="15" cy="22" rx="11" ry="4" transform="rotate(-30 15 22)" fill="none" stroke="#6d7480" strokeWidth={1.400} />
              <circle cx="22" cy="17" r="4" fill="#f2f3f5" />
              <path d="M4 46l4-5h20v18l-4 5H4z" fill="#7f8ea4" stroke="#3a4654" />
              <path d="M4 46h20v18M24 46l4-5" fill="none" stroke="#3a4654" />
              <text x="9" y="62" fontSize="8" fill="#1e2630">3D</text>
              <path d="M4 75l4-5h20v18l-4 5H4z" fill="#cfe3fb" stroke="#3a4654" />
              <path d="M4 75h20v18M24 75l4-5M8 70v18h20M8 88l-4 5" fill="none" stroke="#3a4654" />
              <path d="M12 100h6l-3 3z" fill="#3a4654" />
              <path d="M4 114l4-5h20v18l-4 5H4z" fill="#7f8ea4" stroke="#3a4654" />
              <path d="M4 114h20v18M24 114l4-5" fill="none" stroke="#3a4654" />
              <path d="M12 139h6l-3 3z" fill="#3a4654" />
              <path d="M24 158a10 10 0 1 0 2 8" fill="none" stroke="#3a4654" strokeWidth={2} />
              <path d="M19 159h8v-7z" fill="#3a4654" />
              <path d="M12 177h6l-3 3z" fill="#3a4654" />
              <path d="M4 186h26" stroke="#7d8086" />
              <rect x="4" y="192" width="24" height="22" rx="2" fill="#7f8ea4" stroke="#3a4654" />
              <path d="M4 197h24M16 197v17M7 201h2M7 205h2M7 209h2M19 201h2M19 205h2M19 209h2M10 201h4M10 205h4M10 209h4M22 201h4M22 205h4M22 209h4" stroke="#1e2630" />
            </svg>
          </div>
        </div>

        {/* check dialog, it sits on top of the whole window */}
        <div className="absolute left-[928px] -top-[165px] w-[554px] h-[397px] bg-[#efefef] shadow-[2px_2px_4px_rgba(0,0,0,0.35)] flex flex-col">
          <div className="h-[18px] shrink-0 bg-[#2d7fe0] flex items-center justify-between pl-[9px] pr-[9px] text-white overflow-hidden">
            <span className="-mt-[8px]">校核柱大样</span>
            <span className="-mt-[8px] text-[12px]">✕</span>
          </div>
          <div className="h-[38px] shrink-0 pl-[15px] pt-[4px] flex">
            {checks.map(([label, w]) => (
              <div key={label} className={`flex items-center gap-[3px] shrink-0 ${w}`}>
                <span className="w-[14px] h-[14px] rounded-[3px] bg-[#4c9bf0] flex items-center justify-center shrink-0">
                  <svg width="10" height="8" viewBox="0 0 10 8"><path d="M1 4l3 3 5-6" fill="none" stroke="#fff" strokeWidth={1.600} /></svg>
                </span>
                <span className="whitespace-nowrap text-[#333]">{label}</span>
              </div>
            ))}
          </div>
          <div className="relative ml-[14px] w-[526px] h-[261px] shrink-0 bg-white border border-[#c8cacd] overflow-hidden">
            <div className="flex h-[21px] text-white">
              <div className="w-[14px] bg-[#eeeeee] border-r border-b border-[#d6d8db]" />
              <div className="w-[99px] bg-[#7fb9f9] border-r border-[#a7cffc] flex items-center justify-center pb-[2px]">名称</div>
              <div className="w-[72px] bg-[#7fb9f9] border-r border-[#a7cffc] flex items-center justify-center pb-[2px]">所属楼层</div>
              <div className="w-[312px] bg-[#7fb9f9] flex items-center justify-center pb-[2px]">问题描述</div>
            </div>
            {rows.map(([name, floor], i) => {
              const sel = i === 0;
              return (
                <div key={name} className="flex h-[21px] text-[#222]">
                  <div className={`w-[14px] border-r border-b border-[#d6d8db] flex items-center justify-center pb-[1px] whitespace-nowrap ${sel ? 'bg-[#7fb9f9] text-white' : 'bg-[#eeeeee] text-[#444]'}`}>{i + 1}</div>
                  <div className={`w-[99px] border-r pl-[3px] flex items-center pb-[1px] ${sel ? 'bg-[#d4e8fd] border-b-2 border-b-[#888] border-r-[#d6d8db]' : 'border-b border-[#d6d8db]'}`}>{name}</div>
                  <div className={`w-[72px] border-r pl-[3px] flex items-center pb-[1px] ${sel ? 'bg-white border-b-2 border-b-[#888] border-r-[#d6d8db]' : 'border-b border-[#d6d8db]'}`}>{floor}</div>
                  <div className={`w-[312px] pl-[3px] flex items-center pb-[1px] ${sel ? 'bg-[#d4e8fd] border-b-2 border-r-2 border-[#888]' : 'border-b border-r border-[#d6d8db]'}`}>识别的柱子中存在其他纵筋</div>
                </div>
              );
            })}
            <div className="absolute right-[4px] top-[14px] w-[7px] h-[85px] rounded-full bg-[#cccccc]" />
            <div className="absolute left-[26px] top-[253px] w-[5px] h-[5px] rounded-full bg-[#ff1010]" />
          </div>
          <div className="flex justify-end pr-[14px] pt-[8px]">
            <div className="w-[80px] h-[26px] rounded-[2px] bg-[#2d7fe0] text-white flex items-center justify-center">重新校核</div>
          </div>
          <div className="ml-[14px] mr-[10px] mt-[7px] border-t border-[#b5b7ba] pt-[8px] text-[#333]">检查其他纵筋的位置，不正确的手动修改。</div>
        </div>
      </div>

      {/* status bar */}
      <div className="h-[29px] shrink-0 bg-[#dcdde0] flex items-center text-[#444] whitespace-nowrap">
        <span className="w-[250px] tracking-[0.7px]">= 70120 Y = 15353</span>
        <span className="w-[83px]">层高:&nbsp;&nbsp;&nbsp;5.8</span>
        <span className="w-[133px]">标高:&nbsp;&nbsp;&nbsp;-5.95~-0.15</span>
        <span className="w-[103px]">0</span>
        <span className="w-[104px]">隐藏:&nbsp;&nbsp;0</span>
        <div className="flex gap-[4px] items-center">
          <StatusBtn cls="w-[23px]">
            <svg width="14" height="14" viewBox="0 0 14 14"><path d="M2 1v11h10M2 9h4v3" fill="none" stroke="#333" /></svg>
          </StatusBtn>
          <div className="w-[36px] h-[26px] bg-white border border-[#3c8fdc] flex items-center justify-center gap-[3px]">
            <svg width="16" height="20" viewBox="0 0 16 20"><path d="M3.500 3.500h9v14h-9z" fill="none" stroke="#3c8fdc" /><rect x="1" y="1" width="5" height="5" fill="#f0a030" /></svg>
            <span className="w-0 h-0 border-x-[3px] border-x-transparent border-t-[4px] border-t-[#666]" />
          </div>
          <StatusBtn cls="w-[25px] ml-[3px]">
            <svg width="14" height="18" viewBox="0 0 14 18"><path d="M1 1l12 16M13 1L1 17" stroke="#999" /></svg>
          </StatusBtn>
          <StatusBtn cls="w-[36px] ml-[2px] gap-[3px]">
            <svg width="16" height="14" viewBox="0 0 16 14"><path d="M1 12h14M2 12L12 2" stroke="#333" /></svg>
            <span className="w-0 h-0 border-x-[3px] border-x-transparent border-t-[4px] border-t-[#666]" />
          </StatusBtn>
          <StatusBtn cls="w-[36px] gap-[3px]">
            <svg width="16" height="14" viewBox="0 0 16 14"><path d="M1 5h6M4 2v6" stroke="#333" /><rect x="6" y="8" width="9" height="4" fill="#333" /></svg>
            <span className="w-0 h-0 border-x-[3px] border-x-transparent border-t-[4px] border-t-[#666]" />
          </StatusBtn>
          <StatusBtn cls="w-[72px]">跨图层选择</StatusBtn>
          <StatusBtn cls="w-[59px]">折线选择</StatusBtn>
        </div>
        <span className="ml-[5px]">按鼠标左键指定第一个角点，或拾取构件图元</span>
        <span className="ml-auto mr-[33px]">125 FPS</span>
      </div>

      {/* taskbar, cut off by the bottom of the screenshot */}
      <div className="relative h-[18px] shrink-0 mt-[1px] bg-gradient-to-r from-[#dfe1cf] via-[#e4ebf2] to-[#dcdfcc] overflow-hidden flex">
        <div className="ml-[46px] w-[424px] h-[30px] bg-white flex pl-[21px] pt-[8px] gap-[21px] text-[18px] leading-[26px] text-[#222]">
          <Search size={16} className="mt-[6px] text-[#222]" />
          <span>在这里输入你要搜索的内容</span>
        </div>
        <svg width="430" height="18" viewBox="470 0 430 18" className="block">
          <rect x="610" y="15" width="30" height="4" fill="#e7a92e" />
          <circle cx="686" cy="28" r="15" fill="#3f8fe0" />
          <circle cx="745" cy="28" r="15" fill="#1db7a6" />
          <rect x="788" y="15" width="32" height="8" fill="#2a5fa5" />
          <rect x="850" y="16" width="30" height="6" fill="#58b8ee" />
        </svg>
        <div className="absolute left-[1773px] top-0 text-[16px] leading-[24px] text-[#111]">11:49</div>
        <div className="absolute left-[1556px] top-[13px] w-[40px] h-[10px] border border-[#777] bg-[#eee]">
          <div className="w-[22px] h-full bg-[#2ca24c]" />
        </div>
        <div className="absolute left-[1855px] top-[16px] w-[20px] h-[8px] border border-[#333]" />
      </div>
    </div>
  );
}
